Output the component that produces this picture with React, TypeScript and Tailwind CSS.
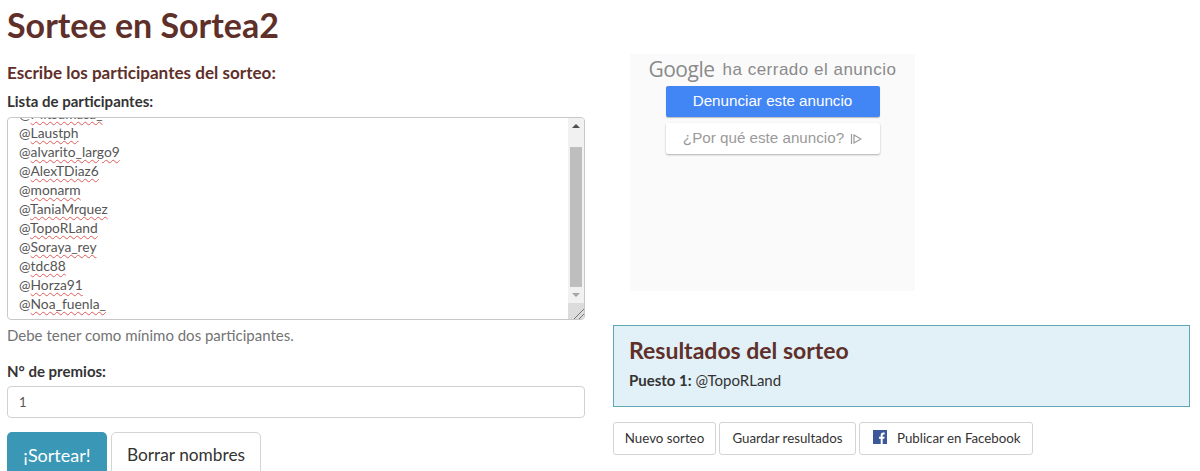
const names = ["@Mitsumasa_", "@Laustph", "@alvarito_largo9", "@AlexTDiaz6", "@monarm", "@TaniaMrquez", "@TopoRLand", "@Soraya_rey", "@tdc88", "@Horza91", "@Noa_fuenla_"];

function Name({ n }: { n: string }) {
  return (
    <div className="h-[19px] leading-[19px]">
      @<span className="underline decoration-wavy decoration-[#e05a5a] decoration-1 underline-offset-2">{n.slice(1)}</span>
    </div>
  );
}

export default function App() {
  return (
    <div className="w-[1200px] h-[471px] overflow-hidden bg-white pl-[7px] font-['Lato',sans-serif] text-[#333]">
      <h1 className="h-[54px] pt-[3px] text-[34px] leading-[44px] font-bold text-[#5f2f2a]">Sortee en Sortea2</h1>
      <div className="flex gap-[28px] items-start">
        <div className="w-[578px] shrink-0">
          <h2 className="mt-[8px] h-[22px] text-[17.1px] leading-[22px] font-bold text-[#5f2f2a]">Escribe los participantes del sorteo:</h2>
          <div className="mt-[7px] h-[20px] text-[15px] leading-[20px] font-bold">Lista de participantes:</div>
          <div className="mt-[6px] h-[203px] flex overflow-hidden rounded-[4px] border border-[#c8c8c8] bg-white">
            <div className="flex-1 overflow-hidden pl-[11px] text-[13.8px] text-[#555]">
              <div className="-mt-[14px]">
                {names.map((n) => <Name key={n} n={n} />)}
              </div>
            </div>
            <div className="w-[16px] flex flex-col bg-[#f1f1f1] items-center">
              <div className="h-[29px] pt-[6px] flex justify-center">
                <div className="w-0 h-0 border-x-[4px] border-x-transparent border-b-[4px] border-b-[#505050]" />
              </div>
              <div className="h-[140px] w-[12px] bg-[#bebebe]" />
              <div className="h-[16px] pt-[6px] flex justify-center">
                <div className="w-0 h-0 border-x-[4px] border-x-transparent border-t-[4px] border-t-[#a3a3a3]" />
              </div>
              <div className="mt-auto h-[16px] w-full bg-[#dcdcdc] flex items-end justify-end">
                <svg width="12" height="12" viewBox="0 0 12 12" fill="none" stroke="#777" strokeWidth="1">
                  <path d="M2 12 12 2M7 12 12 7" />
                </svg>
              </div>
            </div>
          </div>
          <p className="mt-[5px] h-[20px] text-[15px] leading-[20px] text-[#737373]">Debe tener como mínimo dos participantes.</p>
          <div className="mt-[16px] h-[20px] text-[15px] leading-[20px] font-bold">N° de premios:</div>
          <div className="mt-[5px] h-[32px] rounded-[4px] border border-[#d0d0d0] pl-[11px] text-[13px] leading-[31px] text-[#555]">1</div>
          <div className="mt-[14px] flex gap-[4px]">
            <button className="w-[100px] h-[46px] rounded-[5px] bg-[#3a97b5] text-[18px] text-white">¡Sortear!</button>
            <button className="w-[150px] h-[46px] rounded-[5px] border border-[#d4d4d4] bg-white text-[17.3px] text-[#333]">Borrar nombres</button>
          </div>
        </div>
        <div className="w-[577px] shrink-0">
          <div className="ml-[17px] w-[285px] h-[237px] bg-[#fafafa] flex flex-col items-center font-['Liberation_Sans',sans-serif]">
            <div className="h-[32px] flex items-center gap-[8px] text-[#8a8a8a]">
              <span className="text-[21px] font-['Open_Sans',sans-serif] tracking-[-0.5px]">Google</span>
              <span className="text-[17px] tracking-[0.5px]">ha cerrado el anuncio</span>
            </div>
            <div className="w-[214px] h-[31px] rounded-[2px] bg-[#4285f4] text-center text-[15.2px] leading-[30px] text-white shadow-[0_1px_1px_rgba(0,0,0,0.25)]">Denunciar este anuncio</div>
            <div className="mt-[6px] w-[214px] h-[31px] rounded-[2px] bg-white flex items-center justify-center gap-[6px] text-[15.2px] text-[#9a9a9a] shadow-[0_1px_2px_rgba(0,0,0,0.3)]">
              ¿Por qué este anuncio?
              <svg width="12" height="12" viewBox="0 0 12 12" fill="none" stroke="#9a9a9a" strokeWidth="1.2">
                <path d="M1.5 1v10M4 2l7 4-7 4z" />
              </svg>
            </div>
          </div>
          <div className="mt-[34px] h-[82px] border border-[#5fa6b6] bg-[#e2f1f7] pl-[15px] pt-[8px]">
            <h3 className="h-[32px] text-[23px] leading-[32px] font-bold text-[#5f2f2a]">Resultados del sorteo</h3>
            <p className="mt-[4px] text-[15px] leading-[20px]"><b>Puesto 1:</b> @TopoRLand</p>
          </div>
          <div className="mt-[15px] flex gap-[3px] text-[13.3px] text-[#333]">
            <button className="w-[103px] h-[33px] rounded-[3px] border border-[#d4d4d4] bg-white">Nuevo sorteo</button>
            <button className="w-[137px] h-[33px] rounded-[3px] border border-[#d4d4d4] bg-white">Guardar resultados</button>
            <button className="w-[174px] h-[33px] rounded-[3px] border border-[#d4d4d4] bg-white flex items-center pl-[13px] gap-[10px]">
              <svg width="14" height="14" viewBox="0 0 14 14" className="-mt-[4px]">
                <rect width="14" height="14" fill="#3b5998" />
                <path d="M9.7 14V8.7h1.6l.3-2H9.7V5.5c0-.6.2-1 1-1h1V2.7c-.2 0-.8-.1-1.5-.1-1.5 0-2.5.9-2.5 2.6v1.5H6v2h1.7V14z" fill="#fff" />
              </svg>
              Publicar en Facebook
            </button>
          </div>
        </div>
      </div>
    </div>
  );
}
